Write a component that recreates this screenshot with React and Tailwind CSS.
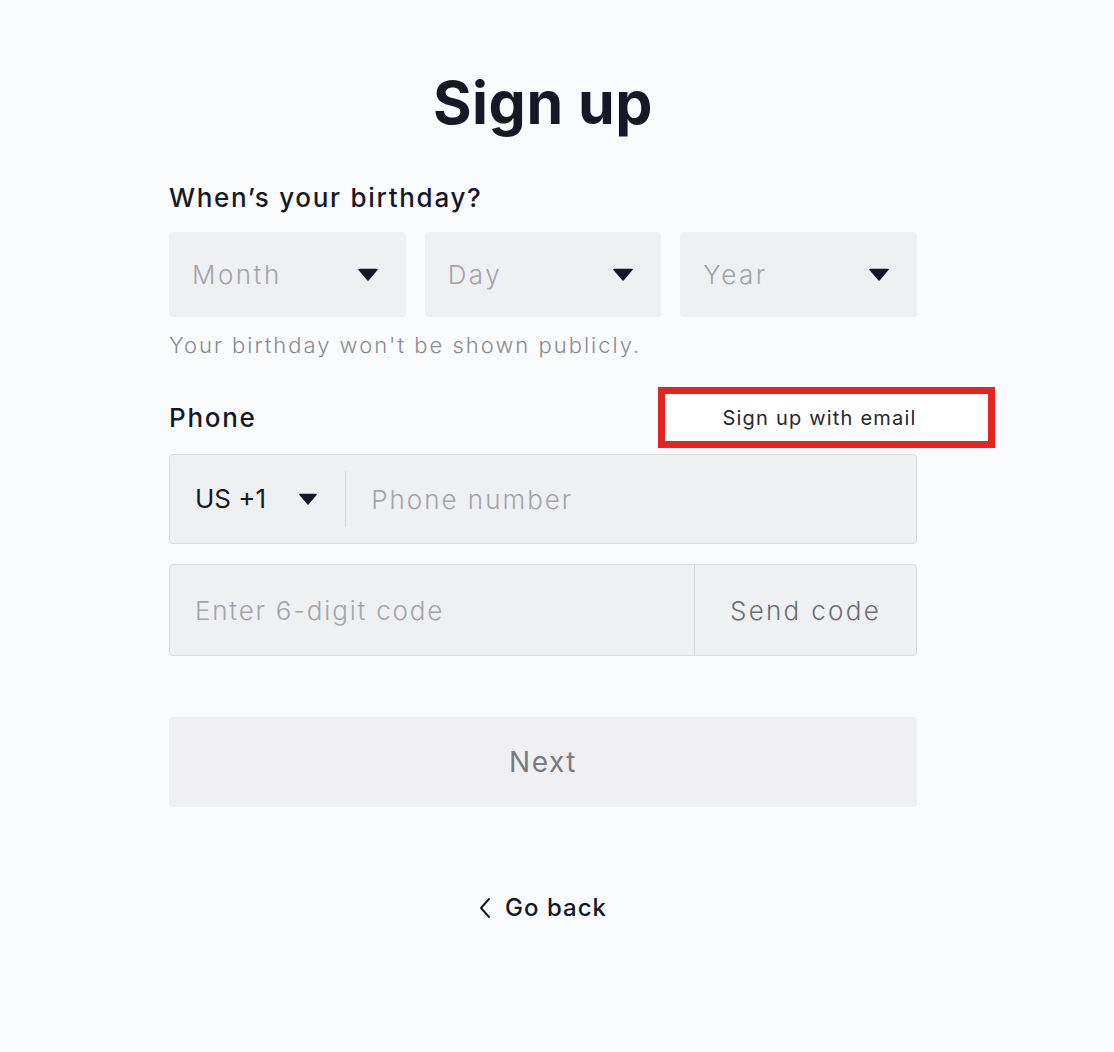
import React from "react";

function Caret({ className = "", w = 20, h = 13 }) {
  return (
    <svg width={w} height={h} viewBox="0 0 20 13" className={className}>
      <path d="M1 1.5 H19 L10 12 Z" fill="#161823" stroke="#161823" strokeWidth="1.5" strokeLinejoin="round" />
    </svg>
  );
}

function Select({ label }) {
  return (
    <div className="flex h-[85px] flex-1 items-center justify-between rounded-[4px] bg-[#eff0f2] pl-[23px] pr-[28px]">
      <span className="text-[26px] font-light tracking-[2.5px] text-[#a4a4aa]">{label}</span>
      <Caret />
    </div>
  );
}

export default function App() {
  return (
    <div
      className="min-h-[1052px] w-full bg-[#f9fbfd] text-[#161823]"
      style={{ fontFamily: "Inter, 'Noto Sans', sans-serif" }}
    >
      <div className="ml-[169px] flex w-[748px] flex-col pt-[67px]">
        <h1 className="text-center text-[59px] font-bold leading-[72px] tracking-[0.5px] text-[#161823]">Sign up</h1>

        <div className="mt-[41px] text-[26px] font-medium leading-[36px] tracking-[1.7px]">When’s your birthday?</div>

        <div className="mt-[16px] flex gap-[19px]">
          <Select label="Month" />
          <Select label="Day" />
          <Select label="Year" />
        </div>

        <div className="mt-[12px] text-[22px] font-light leading-[32px] tracking-[2px] text-[#8a8b91]">
          Your birthday won't be shown publicly.
        </div>

        <div className="mt-[26px] flex items-center justify-between">
          <div className="text-[26px] font-medium leading-[36px] tracking-[1.7px]">Phone</div>
          <div className="relative mr-[-78px] flex h-[61px] w-[337px] items-center justify-center border-[7px] border-[#e5231f] bg-white pr-[14px]">
            <span className="text-[20px] leading-[28px] tracking-[1.2px] text-[#26262e]">Sign up with email</span>
          </div>
        </div>

        <div className="mt-[6px] flex h-[90px] items-center rounded-[4px] border border-[#dcdde1] bg-[#eff0f2]">
          <div className="flex items-center pl-[25px]">
            <span className="text-[26px] leading-[36px] text-[#161823]">US +1</span>
            <Caret className="ml-[33px]" w={18} h={12} />
          </div>
          <div className="ml-[28px] h-[56px] w-px bg-[#d6d7db]" />
          <span className="ml-[25px] text-[26px] font-light tracking-[2px] text-[#a4a4aa]">Phone number</span>
        </div>

        <div className="mt-[20px] flex h-[92px] items-stretch rounded-[4px] border border-[#dcdde1] bg-[#eff0f2]">
          <div className="flex flex-1 items-center pl-[25px]">
            <span className="text-[26px] font-light tracking-[1.8px] text-[#a4a4aa]">Enter 6-digit code</span>
          </div>
          <div className="w-px bg-[#d6d7db]" />
          <div className="flex w-[221px] items-center justify-center">
            <span className="text-[26px] font-light tracking-[2.3px] text-[#6e6e74]">Send code</span>
          </div>
        </div>

        <button className="mt-[61px] flex h-[90px] items-center justify-center rounded-[4px] bg-[#f0f0f2]">
          <span className="text-[28px] font-normal tracking-[1.5px] text-[#7a7a82]">Next</span>
        </button>

        <div className="mt-[85px] flex items-center justify-center gap-[14px]">
          <svg width="12" height="22" viewBox="0 0 12 22">
            <path d="M10 2 L2 11 L10 20" fill="none" stroke="#161823" strokeWidth="2" strokeLinecap="round" strokeLinejoin="round" />
          </svg>
          <span className="text-[24px] font-medium leading-[32px] tracking-[1px]">Go back</span>
        </div>
      </div>
    </div>
  );
}
